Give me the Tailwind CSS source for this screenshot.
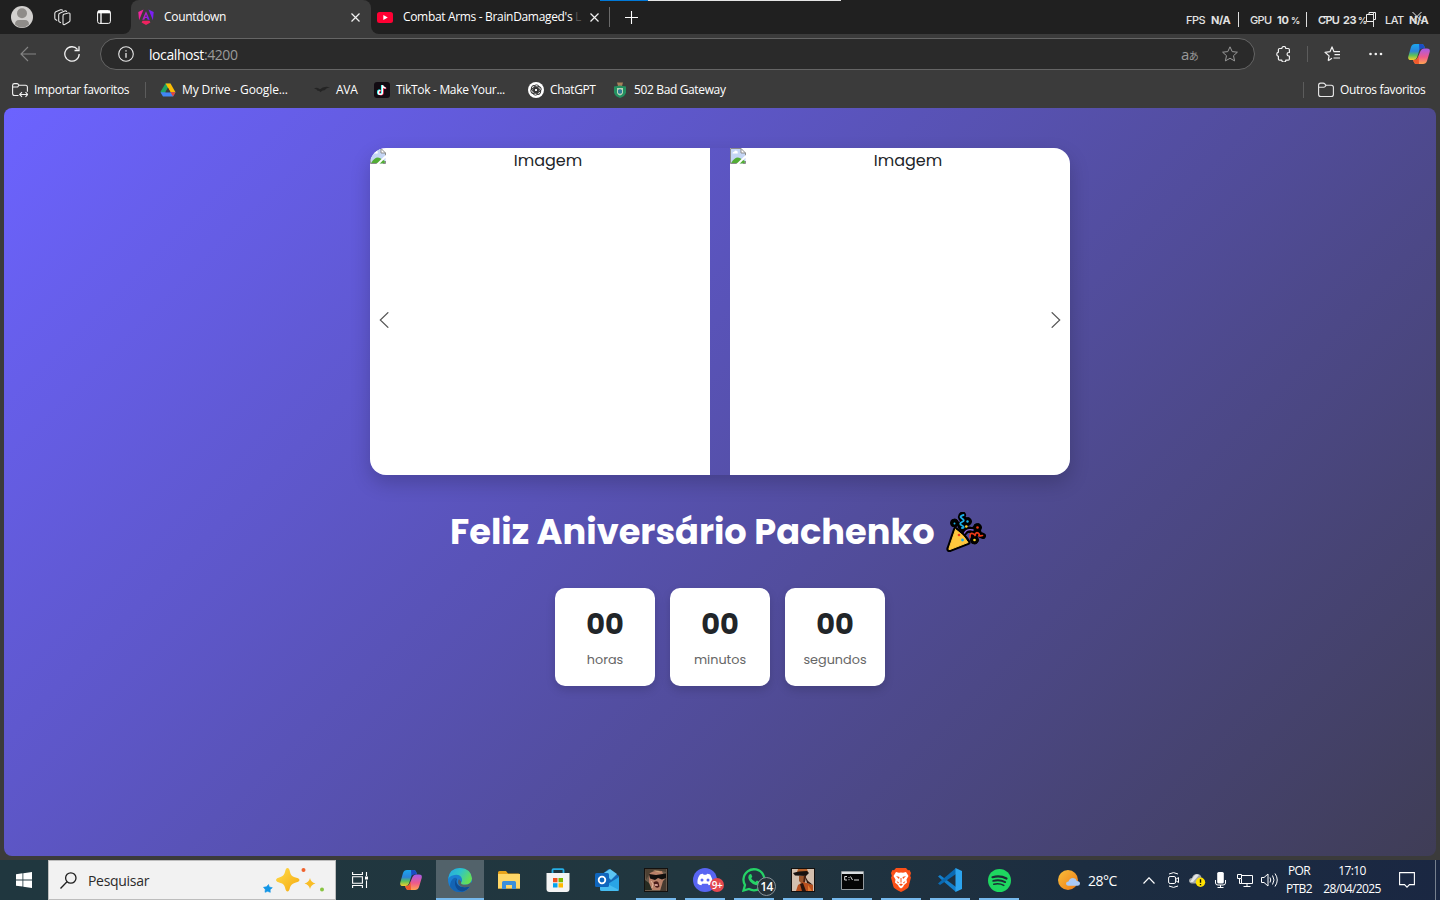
<!DOCTYPE html>
<html lang="pt-BR">
<head>
<meta charset="utf-8">
<title>Countdown</title>
<script src="https://cdn.jsdelivr.net/npm/@tailwindcss/browser@4"></script>
</head>
<body class="w-[1440px] h-[900px] overflow-hidden bg-[#3b3b3b] font-['Segoe_UI','Open_Sans',sans-serif] text-white text-[12px]">
<svg class="absolute h-0 w-0">
  <defs>
    <linearGradient id="cpA" x1="0" y1="0" x2="0" y2="1"><stop offset="0" stop-color="#1ba6ee"/><stop offset=".45" stop-color="#2c83d8"/><stop offset=".7" stop-color="#58c05c"/><stop offset="1" stop-color="#f5ce2c"/></linearGradient>
    <linearGradient id="cpB" x1="0" y1="0" x2="0" y2="1"><stop offset="0" stop-color="#a55bea"/><stop offset=".55" stop-color="#ee5a8b"/><stop offset="1" stop-color="#ffa451"/></linearGradient>
    <linearGradient id="ang" x1="0" y1="0" x2="1" y2=".5"><stop offset="0" stop-color="#f0249b"/><stop offset="1" stop-color="#7a1cf5"/></linearGradient>
    <linearGradient id="edA" x1="0" y1="0" x2="1" y2=".5"><stop offset="0" stop-color="#25a5e4"/><stop offset=".5" stop-color="#2fc4c8"/><stop offset="1" stop-color="#66df55"/></linearGradient>
    <linearGradient id="gold" x1="0" y1="0" x2="1" y2="1"><stop offset="0" stop-color="#ffdc4a"/><stop offset="1" stop-color="#f5a90f"/></linearGradient>
    <linearGradient id="sun" x1="0" y1="0" x2="1" y2="1"><stop offset="0" stop-color="#f9bf3b"/><stop offset="1" stop-color="#ee7a16"/></linearGradient>
    <symbol id="copilot" viewBox="0 0 22 20">
      <path d="M7 0h6.500q2 0 2.700 2l.6 2H14q-2 0-2.600 2L9 13.500Q8 16 5.500 16H3Q-.5 16 .3 12.500L3 3Q4 0 7 0z" fill="url(#cpA)"/>
      <path d="M11 0h2.500q2 0 2.700 2l.6 2.500H14q-2 0-2.600 2z" fill="#1b4cc4"/>
      <path d="M15 20H8.500q-2 0-2.700-2l-.6-2H7q2 0 2.600-2L12.500 7Q13.500 4.500 16 4.500h3q3.500 0 2.700 3.500L19 17q-1 3-4 3z" fill="url(#cpB)"/>
      <path d="M5.200 16H7q2 0 2.600-2l1-2.500L11 20H8.500q-2 0-2.700-2z" fill="#ef5a2c"/>
    </symbol>
    <symbol id="folder" viewBox="0 0 16 16"><path d="M.6 12.500V3.200Q.6 1.100 2.600 1.100h2.600q1 0 1.600.7l1.100 1.400h5.400q2.100 0 2.100 2.100v7.200q0 2-2.100 2H2.700q-2.100 0-2.100-2zM.6 5.200h5.200q.7 0 1.200-.6l1-1.300" fill="none" stroke="#e8e8e8" stroke-width="1.100"/></symbol>
    <symbol id="broken" viewBox="0 0 16 16">
      <path d="M.5.500h10.500l4.500 4.500v10.500H.5z" fill="#c5d6f5"/><path d="M2.500 5.500q0-1.700 1.700-1.700Q5 2 6.600 2.800q1.500.2 1.200 2.700z" fill="#fff"/>
      <path d="M.8 15.500q4.500-7.500 9-5.500l5 3v2.500z" fill="#53ad35"/>
      <path d="M.5 15.500V.5h10.500M15.500 5v3M.5 15.500h8M13 15.500h2.500V13" fill="none" stroke="#8b8b8b"/>
      <path d="M11 .5V5h4.500z" fill="#fff" stroke="#8b8b8b"/><path d="M16 6.800v2.500l-7 7H6z" fill="#fff"/>
    </symbol>
  </defs>
</svg>

<!-- Tab strip -->
<header class="relative flex h-[34px] bg-[#3b3b3b]">
  <div class="flex w-[131px] items-center pl-[11px] bg-[#202020] rounded-br-lg relative">
    <svg class="w-[22px] h-[22px]" viewBox="0 0 22 22"><circle cx="11" cy="11" r="11" fill="#d2d0ce"/><circle cx="11" cy="7.300" r="5" fill="#8f8c89"/><path d="M4 18.500q0-4.500 4-4.500h6q4 0 4 4.500-3 3-7 3t-7-3z" fill="#8f8c89"/></svg>
    <svg class="ml-[21px] w-[17px] h-[17px]" viewBox="0 0 17 17" fill="none" stroke="#e6e6e6" stroke-width="1.100"><path d="M9.800 5.300l4.500-1.300q1.700-.3 1.700 1.200v6.300q0 1.100-1 1.400l-4.300 2.500q-1.700.8-1.700-.8V7q0-1.300.8-1.700z"/><path d="M7 13.700l-1.500-.6Q4.700 12.600 4.700 11.500V6q0-1.300 1-1.700l5-2.300q1.700-.4 2 1M3.200 11.500L1.800 10.700Q.8 10.300.8 9V4.500q0-1.200 1-1.700L6.600.8q1.600-.4 2.100.6"/></svg>
    <svg class="ml-[26px] w-[14px] h-[14px]" viewBox="0 0 14 14" fill="none" stroke="#fff"><rect x=".6" y=".6" width="12.800" height="12.800" rx="2"/><path d="M.6 2.600h12.800M4 3v10.500" stroke-width="1.300"/><path d="M1 1.900h12" stroke-width="2.400"/></svg>
  </div>
  <div class="w-[240px] bg-[#202020]"><div class="flex h-full items-center rounded-t-lg bg-[#3b3b3b] pl-[7px]">
    <svg class="w-4 h-4" viewBox="0 0 16 16"><path d="M5.500.6L.3 3l.8 8.200z" fill="#f2249c"/><path d="M10.500.6L15.700 3l-.8 8.200z" fill="#7b1ff4"/><path d="M8 2.300l3.700 8.500h-2L9 9H7l-.7 1.800h-2zM8 5.500L7.100 7.800h1.800z" fill="url(#ang)"/><path d="M4.500 11.800h7l.9 1.800L8 16l-4.400-2.400z" fill="#f0225f"/></svg>
    <span class="ml-[10px] w-[187px] whitespace-nowrap tracking-[-0.32px]">Countdown</span>
    <svg class="w-[9px] h-[9px]" viewBox="0 0 9 9" stroke="#f2f2f2" stroke-width="1.200"><path d="M.5.500l8 8M8.500.5l-8 8"/></svg>
  </div></div>
  <div class="flex w-[239px] items-center rounded-bl-lg bg-[#202020] pl-[6px]">
    <svg class="w-4 h-[11px]" viewBox="0 0 16 11"><rect width="16" height="11" rx="2.500" fill="#f03"/><path d="M6.300 3v5l4.500-2.500z" fill="#fff"/></svg>
    <span class="ml-[10px] w-[177px] whitespace-nowrap tracking-[-0.33px]">Combat Arms - BrainDamaged's <span class="text-[#555]">L</span></span>
    <svg class="ml-[10px] w-[9px] h-[9px]" viewBox="0 0 9 9" stroke="#f2f2f2" stroke-width="1.200"><path d="M.5.500l8 8M8.500.5l-8 8"/></svg>
    <span class="ml-[10px] h-5 w-px shrink-0 bg-[#6a6a6a]"></span>
  </div>
  <div class="flex flex-1 items-center bg-[#202020] pl-[15px]">
    <svg class="w-[13px] h-[13px]" viewBox="0 0 13 13" stroke="#fff" stroke-width="1.100"><path d="M6.500 0v13M0 6.500h13"/></svg>
  </div>
  <div class="absolute left-[600px] top-0 flex h-px w-[241px]"><span class="w-12 bg-[#0078d7]"></span><span class="flex-1 bg-[#e6e6e6]"></span></div>
  <!-- window controls -->
  <svg class="absolute left-[1316px] top-[11px] w-[110px] h-[14px]" viewBox="0 0 110 14" fill="none" stroke="#f2f2f2"><path d="M5 5.500h10M50.500 3.500h7v7h-7zM53 3V1.500h6.500v7H58"/><path d="M96.500 1l9 9M105.500 1l-9 9"/></svg>
  <!-- performance overlay -->
  <div class="absolute left-[1186px] top-[11px] flex h-4 items-center font-['Inter',sans-serif] text-[11px] leading-4 text-[#e2e2e2] whitespace-nowrap">
    <span class="w-[25px] pt-0.5 font-medium tracking-[-0.5px]">FPS</span><b class="w-[27px] pt-0.5 tracking-[-0.5px]">N/A</b><i class="h-[15px] w-px bg-[#ddd]"></i>
    <span class="ml-[11px] w-[27px] pt-0.5 font-medium tracking-[-0.6px]">GPU</span><b class="w-[14px] pt-0.5 tracking-[-0.3px]">10</b><b class="w-[15px] pt-[3px] text-[9px]">%</b><i class="h-[15px] w-px bg-[#ddd]"></i>
    <span class="ml-[11px] w-[25px] pt-0.5 tracking-[-0.7px] font-semibold">CPU</span><b class="w-[15px] pt-0.5 tracking-[-0.5px]">23</b><b class="w-[15px] pt-[3px] text-[9px]">%</b><i class="h-[15px] w-px bg-[#ddd]"></i>
    <span class="ml-[11px] w-[24px] pt-0.5 font-medium tracking-[-0.5px]">LAT</span><b class="pt-0.5 tracking-[-0.5px]">N/A</b>
  </div>
</header>

<!-- Address bar -->
<div class="flex h-10 items-center">
  <svg class="ml-5 w-4 h-4" viewBox="0 0 16 16" fill="none" stroke="#858585" stroke-width="1.100"><path d="M16 8H1M8 1L1 8l7 7"/></svg>
  <svg class="ml-7 w-4 h-4" viewBox="0 0 16 16" fill="none" stroke="#f2f2f2" stroke-width="1.300"><path d="M15.200 8A7.200 7.200 0 1 1 13.500 3.300M15 .3v4.200h-4.500"/></svg>
  <div class="ml-5 flex h-8 w-[1155px] items-center rounded-full border border-[#656565] bg-[#2a2a2a] pl-[17px]">
    <svg class="w-4 h-4" viewBox="0 0 16 16" fill="none" stroke="#e8e8e8" stroke-width="1.100"><circle cx="8" cy="8" r="7.300"/><path d="M8 7v4.700M8 4.200v1.400" stroke-width="1.300"/></svg>
    <span class="ml-[15px] w-[1032px] whitespace-nowrap text-[14px] tracking-[-0.42px]">localhost<span class="text-[#9a9a9a]">:4200</span></span>
    <span class="w-[21px] whitespace-nowrap text-[15px] leading-none tracking-[-0.5px] text-[#999]">a<span class="font-['Noto_Sans_CJK_JP',sans-serif] text-[10px]">あ</span></span>
    <svg class="ml-5 w-4 h-4" viewBox="0 0 16 16" fill="none" stroke="#999" stroke-linejoin="round"><path d="M8 .8l2.200 4.800 5.200.6-3.900 3.500 1.100 5.200L8 12.300l-4.600 2.600 1.100-5.200L.6 6.200l5.200-.6z"/></svg>
  </div>
  <svg class="ml-[20px] w-4 h-4" viewBox="0 0 16 16" fill="none" stroke="#f2f2f2" stroke-width="1.200" stroke-linejoin="round"><path d="M6.800 2.500a2 2 0 0 1 4 0h2.400q1.200 0 1.200 1.200V6.500h-.6a1.700 1.700 0 0 0 0 3.500h.6v3q0 1.200-1.200 1.200h-2.400a2 2 0 0 1-4 0H4.600q-1.200 0-1.200-1.200v-2.700a2.100 2.100 0 0 1 0-4.100V3.700q0-1.200 1.200-1.200z"/></svg>
  <span class="ml-4 h-4 w-px bg-[#5c5c5c]"></span>
  <svg class="ml-4 w-[17px] h-4" viewBox="0 0 17 16" fill="none" stroke="#f2f2f2" stroke-width="1.200" stroke-linejoin="round"><path d="M4.200 14.700l.9-4.800L1 6.300l5-.6 2-4.800 2 4.800h6M4.200 14.700L8 12.300M10.500 8.700H16M9.500 12H16"/></svg>
  <svg class="ml-[28px] w-[14px] h-4" viewBox="0 0 14 16" fill="#f2f2f2"><circle cx="1.500" cy="8" r="1.300"/><circle cx="6.800" cy="8" r="1.300"/><circle cx="12" cy="8" r="1.300"/></svg>
  <svg class="ml-[25px] w-[22px] h-5"><use href="#copilot"/></svg>
</div>

<!-- Favourites bar -->
<nav class="flex h-[34px] items-center pb-0.5 whitespace-nowrap">
  <svg class="ml-3 w-4 h-4" viewBox="0 0 16 16" fill="none" stroke="#f2f2f2" stroke-width="1.100"><path d="M6.500 13.500h-4Q.6 13.500.6 11.500v-8Q.6 1.600 2.500 1.600h2.300q1 0 1.500.7l.8.900H13.500q1.900 0 1.900 2v4.500M.6 5h5l1.500-1.800M8 12.500h7.500M10 10.200l-2.300 2.300L10 14.800M13.500 10.200l2.300 2.300-2.300 2.300"/></svg>
  <span class="ml-[6px] w-[111px] tracking-[-0.38px]">Importar favoritos</span>
  <span class="h-4 w-px bg-[#5c5c5c]"></span>
  <svg class="ml-[14px] w-4 h-4" viewBox="0 0 16 16"><path d="M5.500 1.500h5L8 5.800 3.200 14 .5 9.800z" fill="#1fa463"/><path d="M5.500 1.500h5l5 8.700h-5z" fill="#fbbc04"/><path d="M.5 10.200h15L13 14.500H3z" fill="#4285f4"/><path d="M8 5.800l2.500 4.400h-5z" fill="#3b3b3b"/><path d="M10.500 10.200h5L13 14.500z" fill="#ea4335"/></svg>
  <span class="ml-[6px] w-[132px] tracking-[-0.12px]">My Drive - Google...</span>
  <svg class="w-4 h-4" viewBox="0 0 16 16"><path d="M0 6.500q3-2 6 .8Q9.500 3.500 16 5.200q-4 .5-5.300 3-2.500-.4-4.200 2Q5.500 8.200 3.500 8.800 3 6.800 0 6.500z" fill="#242424"/></svg>
  <span class="ml-[6px] w-[38px] tracking-[-0.3px]">AVA</span>
  <svg class="w-4 h-4" viewBox="0 0 16 16"><rect width="16" height="16" rx="3" fill="#120b12"/><path d="M7.800 3v7.200a2 2 0 1 1-2-2M8 3q.3 2.500 3.300 2.900" fill="none" stroke="#25f4ee" stroke-width="1.700"/><path d="M9 3.500v7.200a2 2 0 1 1-2-2M9 3.500q.3 2.500 3.300 2.900" fill="none" stroke="#fe2c55" stroke-width="1.500"/><path d="M8.400 3.200v7.200a2 2 0 1 1-2-2M8.400 3.200q.3 2.500 3.300 2.900" fill="none" stroke="#fff" stroke-width="1.300"/></svg>
  <span class="ml-[6px] w-[132px] tracking-[-0.31px]">TikTok - Make Your...</span>
  <svg class="w-4 h-4" viewBox="0 0 16 16"><circle cx="8" cy="8" r="8" fill="#fff"/><g fill="none" stroke="#333" stroke-width=".9"><rect x="6" y="2.800" width="5" height="7" rx="2.500"/><rect x="6" y="2.800" width="5" height="7" rx="2.500" transform="rotate(60 8 8)"/><rect x="6" y="2.800" width="5" height="7" rx="2.500" transform="rotate(120 8 8)"/><rect x="6" y="2.800" width="5" height="7" rx="2.500" transform="rotate(180 8 8)"/><rect x="6" y="2.800" width="5" height="7" rx="2.500" transform="rotate(240 8 8)"/><rect x="6" y="2.800" width="5" height="7" rx="2.500" transform="rotate(300 8 8)"/></g></svg>
  <span class="ml-[6px] w-[62px] tracking-[-0.42px]">ChatGPT</span>
  <svg class="w-4 h-4" viewBox="0 0 16 16"><path d="M5 .5h6l-1 3.500H6z" fill="#a8805a"/><path d="M2 4.500l6-1 6 1v6q-1 4-6 5.500-5-1.500-6-5.500z" fill="#249060"/><path d="M5 6h6v5q-1 2-3 2.500Q6 13 5 11z" fill="#b9d5b5"/><path d="M6 8l2-1 2 1v3l-2 1-2-1z" fill="#347a9a"/></svg>
  <span class="ml-[6px] w-[669px] tracking-[-0.36px]">502 Bad Gateway</span>
  <span class="h-4 w-px bg-[#5c5c5c]"></span>
  <svg class="ml-[14px] w-4 h-4"><use href="#folder"/></svg>
  <span class="ml-[6px] tracking-[-0.35px]">Outros favoritos</span>
</nav>

<!-- Page -->
<main class="mx-1 flex h-[748px] flex-col items-center overflow-hidden rounded-lg bg-[linear-gradient(135deg,#6c63ff,#3f3d56)] pt-10 font-['Poppins',sans-serif] text-[#212529]">
  <section class="relative flex h-[327px] w-[700px] gap-5 overflow-hidden rounded-2xl shadow-[0_8px_20px_rgba(0,0,0,0.2)]">
    <div class="flex flex-1 bg-white"><svg class="h-4 w-4"><use href="#broken"/></svg><span class="flex-1 pt-px text-center text-[16px] leading-6">Imagem</span></div>
    <div class="flex flex-1 bg-white"><svg class="h-4 w-4"><use href="#broken"/></svg><span class="flex-1 pt-px text-center text-[16px] leading-6">Imagem</span></div>
    <svg class="absolute left-[9px] top-[164px] h-4 w-[10px]" viewBox="0 0 10 16" fill="none" stroke="#555" stroke-width="1.200"><path d="M9.300.300L1.300 8l8 7.700"/></svg>
    <svg class="absolute right-[9px] top-[164px] h-4 w-[10px]" viewBox="0 0 10 16" fill="none" stroke="#555" stroke-width="1.200"><path d="M.7.300l8 7.700-8 7.700"/></svg>
  </section>
  <h1 class="mt-[35px] flex h-[43px] w-[540px] items-center whitespace-nowrap text-[35.2px] font-bold leading-none text-white">
    <span class="w-[496px]">Feliz Aniversário Pachenko</span>
    <svg class="h-10 w-10 shrink-0" viewBox="0 0 40 40" fill="none" stroke-linecap="round" stroke-linejoin="round">
      <g stroke="#000" fill="#000">
        <path d="M9.500 17.500L3 36.500q-.6 1.500 1 1L22 30.500Q18 23 9.500 17.500z" stroke-width="5"/>
        <path d="M16.500 3q-2.500 2 .5 4t-.5 4.500 1 4.500" fill="none" stroke-width="7"/>
        <path d="M19 20q2.500-4 7-1.500L31 15.700l2 6.500 4 1.800M27 23l1.600 5" stroke-width="6"/>
        <circle cx="8.500" cy="11" r="4"/><circle cx="21.500" cy="9.500" r="4"/><circle cx="28.500" cy="28" r="4"/><circle cx="31.500" cy="15.500" r="4"/>
      </g>
      <path d="M9.500 17.500L3 36.500q-.6 1.500 1 1L22 30.500Q18 23 9.500 17.500z" fill="#ffc83d" stroke="#ffc83d"/>
      <path d="M17.500 3q-5 1.500-1.500 3.500t0 3.500 0 3.500 0 2.500" stroke="#1baee8" stroke-width="1.900"/>
      <path d="M18.500 21q2-4.500 8.500-3" stroke="#8562d5" stroke-width="1.400"/>
      <path d="M24 25q0-4.500 2.500-3.500t2.500 2q1-4 3-2.500t1 2.500 3.500 0" stroke="#f03a17" stroke-width="1.700"/>
      <g fill="#f03a17"><circle cx="13" cy="23" r="1.300"/><circle cx="31.500" cy="15.500" r="1.300"/></g>
      <g fill="#1baee8"><circle cx="16.500" cy="28" r="1.400"/><circle cx="21.500" cy="9.500" r="1.200"/><circle cx="8.500" cy="11.500" r="1"/></g>
      <g fill="#ffd32a"><circle cx="20.300" cy="14.500" r="1.300"/><circle cx="28.500" cy="28" r="1.300"/></g>
    </svg>
  </h1>
  <section class="mt-[35px] flex gap-[15px]">
    <div class="flex h-[98px] w-[100px] flex-col items-center rounded-[10px] bg-white pt-[18px] shadow-[0_4px_10px_rgba(0,0,0,0.15)]"><b class="text-[28.8px] leading-9">00</b><span class="mt-[8px] text-[12.8px] leading-5 text-[#666]">horas</span></div>
    <div class="flex h-[98px] w-[100px] flex-col items-center rounded-[10px] bg-white pt-[18px] shadow-[0_4px_10px_rgba(0,0,0,0.15)]"><b class="text-[28.8px] leading-9">00</b><span class="mt-[8px] text-[12.8px] leading-5 text-[#666]">minutos</span></div>
    <div class="flex h-[98px] w-[100px] flex-col items-center rounded-[10px] bg-white pt-[18px] shadow-[0_4px_10px_rgba(0,0,0,0.15)]"><b class="text-[28.8px] leading-9">00</b><span class="mt-[8px] text-[12.8px] leading-5 text-[#666]">segundos</span></div>
  </section>
</main>

<!-- Taskbar -->
<footer class="mt-1 flex h-10 items-center bg-[linear-gradient(90deg,#20373f,#21363f_50%,#1c2d40_75%,#1a2742)] whitespace-nowrap">
  <svg class="ml-4 w-4 h-4" viewBox="0 0 16 16" fill="#fff"><path d="M0 2.200l6.500-.9v6.200H0zM7.300 1.200L16 0v7.500H7.300zM0 8.400h6.500v6.200L0 13.700zM7.300 8.400H16V16l-8.700-1.300z"/></svg>
  <div class="ml-4 flex h-10 w-[288px] items-center border border-[#bdbdbd] bg-[#f2f2f2] pl-[11px] text-[#2b2b2b]">
    <svg class="w-[17px] h-[17px]" viewBox="0 0 17 17" fill="none" stroke="#1f1f1f" stroke-width="1.300"><circle cx="10.800" cy="6" r="5.200"/><path d="M7 9.800L.5 16.500"/></svg>
    <span class="ml-[11px] w-[175px] text-[14px] tracking-[-0.3px]">Pesquisar</span>
    <svg class="w-[62px] h-[26px]" viewBox="0 0 62 26"><path d="M24.500 1q1.800 0 2.500 4 .8 3.800 4 5 5.500 1.200 5.500 3t-5 3q-3.500 1-4.500 4.500-.8 4-2.500 4t-2.500-4q-1-3.700-4.500-4.500-4.500-1.200-4.500-3t4.500-3q3.500-1 4.500-5 .7-4 2.500-4z" fill="url(#gold)"/><path d="M47 11q.8 4.300 5.500 5.500-4.500 1-5.500 5.500-1-4.500-5.500-5.500 4.500-1.200 5.500-5.500z" fill="#f9bd26"/><path d="M5.500 17.500l.8 2.500 3 .7-2.200 2 .2 2.600-2.700-1-2.600 1 .3-2.800L.5 20.300l3-.6z" fill="#1296e6" stroke="#1296e6" stroke-width=".6" stroke-linejoin="round"/><circle cx="40.500" cy="3" r="2" fill="#f0622d"/><circle cx="59" cy="22.500" r="2" fill="#88c440"/></svg>
  </div>
  <svg class="ml-4 w-4 h-4" viewBox="0 0 16 16" fill="none" stroke="#fff" stroke-width="1.100"><path d="M.6 0v2.500h9.800V0M.6 16v-2.500h9.800V16M.6 4.800h9.800v6.400H.6zM14.500 0v4M14.500 8.500V16"/><path d="M13 4.500h3v3h-3z" fill="#fff" stroke="none"/></svg>
  <div class="ml-[19px] flex h-10 gap-px *:flex *:w-12 *:items-center *:justify-center *:relative">
    <div><svg class="w-[22px] h-5"><use href="#copilot"/></svg></div>
    <div class="bg-[#52626a]"><svg class="w-6 h-6" viewBox="0 0 24 24"><circle cx="12" cy="12" r="12" fill="#1b7fd2"/><path d="M9 11q-2.500 4 0 8 3 4.500 8 4-2.500 1-5 1Q5 24 2 18.500q0-6 4-8.500 2-1 3 1z" fill="#1464b4"/><path d="M9 10.500q-1.500 3.500 1 6.500 4 4 12 1.200Q19 23 14 23.500q-5-1-6.500-5.500-1.500-5 1.500-7.500z" fill="#0f4c94"/><path d="M13 13.500Q13 16.500 17 16.800q4 0 6-3l1.500 2-2 2.800Q14 20.500 11 17q-2-3 0-6z" fill="#52626a"/><path d="M.2 11Q1.500 0 12 0q11 .5 12 10.500Q23.500 16.500 17 16.500q-4 0-4-1.500 1.500-1.500 1-4Q12.500 6.500 8 6.800 2 7.300.2 11z" fill="url(#edA)"/></svg><i class="absolute bottom-0 h-0.5 w-12 bg-[#76b9ed]"></i></div>
    <div><svg class="w-[22px] h-5" viewBox="0 0 22 20"><path d="M0 2.500Q0 1 1.500 1H8l2 2.500H20.500Q22 3.500 22 5v13.500H0z" fill="#e9a41a"/><path d="M0 4h22v14.500H0z" fill="#ffd767"/><path d="M4 19v-6.500Q4 11 5.500 11h11q1.500 0 1.500 1.500V19h-4v-4H8v4z" fill="#3b8fdb"/></svg></div>
    <div><svg class="w-6 h-6" viewBox="0 0 24 24"><path d="M6.500 6V2Q6.500 1.200 7.500 1.200h9q1 0 1 .8v4" fill="none" stroke="#26aee5" stroke-width="1.800"/><path d="M.5 5h23v16q0 3-3 3h-17q-3 0-3-3z" fill="#f4f4f4"/><path d="M7 10h4.500v4.300H7z" fill="#f2511f"/><path d="M12.500 10H17v4.300h-4.500z" fill="#7eba00"/><path d="M7 15.200h4.500v4.300H7z" fill="#04a3ee"/><path d="M12.500 15.200H17v4.300h-4.500z" fill="#feb800"/></svg></div>
    <div><svg class="w-6 h-6" viewBox="0 0 24 24"><path d="M5 8l8.500-7L24 8v13q0 2-2 2H7q-2 0-2-2z" fill="#1569b8"/><path d="M9 5l6-4 7 5-6 6z" fill="#5cc5f3"/><path d="M5 21l19-12v12q0 2-2 2H7q-2 0-2-2z" fill="#29a5e6"/><path d="M5 12l19 10q-1 1-2 1H7q-2 0-2-2z" fill="#46bdf1"/><rect y="5" width="14" height="14" rx="1.500" fill="#0f66bd"/><circle cx="7" cy="12" r="3.300" fill="none" stroke="#fff" stroke-width="1.800"/></svg></div>
    <div><svg class="w-6 h-6" viewBox="0 0 24 24"><path d="M0 0h24v24H0z" fill="#14110f"/><path d="M1 1h22v22H1z" fill="#6b5a4b"/><path d="M5 3q7-3 13 0l3 9-3 10H8L5 15z" fill="#b98169"/><path d="M1 1h21v3Q12 1 6 5L2 12z" fill="#4d4032"/><path d="M9 2l6 1 3 2-5-1z" fill="#c9a27a"/><path d="M5 6l7 1 10-1.500V10l-4 1.500-4-1.500-3 2-5-1.500z" fill="#100e0d"/><path d="M9.500 14.500q3-2.500 5 0l1 4q-3 3-5-1z" fill="#4a1c18"/><path d="M10.500 16h3l.5 2h-3z" fill="#d09a90"/><path d="M1 12l4 3 3 7H1z" fill="#262b22"/><path d="M19 13l3-3v13h-6z" fill="#463a30"/><path d="M7 13l2 3-1 4" stroke="#e2b79c" fill="none"/></svg><i class="absolute bottom-0 h-0.5 w-10 bg-[#76b9ed]"></i></div>
    <div><svg class="w-6 h-6" viewBox="0 0 24 24"><circle cx="12" cy="12" r="12" fill="#5865f2"/><path d="M7 6.500q2-1 3-.8l.6 1h2.800l.6-1q1.500 0 3.200.8 2.800 4.500 2.300 9-2 1.600-3.800 1.700l-.9-1.500H9.200l-.9 1.500q-2-.1-3.800-1.700-.5-5 2.500-9z" fill="#fff"/><circle cx="9" cy="12" r="1.500" fill="#5865f2"/><circle cx="15" cy="12" r="1.500" fill="#5865f2"/></svg><span class="absolute left-[29px] top-[18px] flex h-[14px] w-[14px] items-center justify-center rounded-full bg-[#e5484f] text-[10px] font-semibold leading-none tracking-[-0.4px]">9+</span><i class="absolute bottom-0 h-0.5 w-10 bg-[#76b9ed]"></i></div>
    <div><svg class="w-6 h-6" viewBox="0 0 24 24"><path d="M1.500 22.500L3 17Q1.200 14 1.500 11A10.500 10.500 0 1 1 7 21z" fill="none" stroke="#25d366" stroke-width="2.300"/><path d="M8 6l1.300.2 1 2.600L9.200 10.300q1.300 2.500 4.200 3.800l1.500-1.500 2.600 1.200q.3 2.500-2.500 3.300Q11.500 17.500 8 13.500 4.500 9 8 6z" fill="#25d366"/></svg><span class="absolute left-[27px] top-[17px] flex h-[19px] w-[19px] items-center justify-center rounded-full border border-[#88939a] bg-[#263238] text-[12px] font-semibold leading-none tracking-[-0.6px]">14</span><i class="absolute bottom-0 h-0.5 w-10 bg-[#76b9ed]"></i></div>
    <div><svg class="w-6 h-6" viewBox="0 0 24 24"><path d="M0 0h24v24H0z" fill="#14110f"/><path d="M1 1h22v22H1z" fill="#d3bfae"/><path d="M7 1h9l1 3H6z" fill="#b5602a"/><path d="M2 5q5-2 14-2l2 2-3 3-11-.5z" fill="#17110f"/><path d="M8 8h7l-1 6-3 2-3-3z" fill="#9b552c"/><path d="M13 7l2 1-1 6-2 2z" fill="#4a2213"/><path d="M5 23l2-6 5-3 4 1 6 2v6z" fill="#b9501e"/><path d="M12 15l3 8h-4l-2-7z" fill="#28150f"/><path d="M17 17l4 6h-4z" fill="#e07a33"/><path d="M14 8l3 5 5 4-6-2z" fill="#2b160e"/></svg><i class="absolute bottom-0 h-0.5 w-10 bg-[#76b9ed]"></i></div>
    <div><svg class="w-[23px] h-[19px]" viewBox="0 0 23 19"><path d="M.5.500h22v18H.5z" fill="#050505" stroke="#93999d"/><path d="M1 1h21v2H1z" fill="#d9dde0"/><path d="M6 5.500H3.700v3.500H6M8 6v1M8 8.200v1M9.500 5.500l2 3.500M13 9h5" fill="none" stroke="#dadada"/></svg><i class="absolute bottom-0 h-0.5 w-10 bg-[#76b9ed]"></i></div>
    <div><svg class="w-5 h-6" viewBox="0 0 20 24"><path d="M5 0h10l2 2.200 1.500-.2L20 5l-.8 3L20 9.500 17.500 19Q17 20.500 10 24 3 20.500 2.500 19L0 9.500.8 8 0 5l1.500-3 1.500.2z" fill="#fb5018"/><path d="M5 4l3 .8L10 4.500l2 .3L15 4l2.500 4-2 3.500.5 3-3 2.500 -1 2-2 1.500-2-1.500-1-2-3-2.500.5-3-2-3.500z" fill="#fff"/><path d="M5 8l3.500 1L8 11zM15 8l-3.500 1 .5 2zM8 16.500l2-1 2 1-2 1.500zM9.500 10h1v4.500h-1zM5.500 13l2.500 1.500-1 1zM14.500 13L12 14.500l1 1z" fill="#fb5018"/></svg><i class="absolute bottom-0 h-0.5 w-10 bg-[#76b9ed]"></i></div>
    <div><svg class="w-6 h-6" viewBox="0 0 24 24"><path d="M0 8.500L2 7l16 12v5L5 13z" fill="#1480cd"/><path d="M0 15.500L2 17 18 6V0L5 11z" fill="#0a6ab3"/><path d="M17.500 0L24 3v18l-6.500 3z" fill="#2ca4ee"/></svg><i class="absolute bottom-0 h-0.5 w-10 bg-[#76b9ed]"></i></div>
    <div><svg class="w-[23px] h-[23px]" viewBox="0 0 23 23" fill="none" stroke="#1b2c35" stroke-linecap="round"><circle cx="11.500" cy="11.500" r="11.500" fill="#1ed760" stroke="none"/><path d="M4.500 8.200q7.500-2.200 14 1.300" stroke-width="2.200"/><path d="M5.200 11.900q6.500-1.800 12 1.200" stroke-width="1.800"/><path d="M5.800 15.300q5.500-1.300 10 1.100" stroke-width="1.500"/></svg><i class="absolute bottom-0 h-0.5 w-10 bg-[#76b9ed]"></i></div>
  </div>
  <svg class="ml-[35px] w-[22px] h-[20px]" viewBox="0 0 22 20"><circle cx="10" cy="10" r="10" fill="url(#sun)"/><path d="M10 15.800q-2-.3-2-2 0-2.200 2.500-2.300Q11.500 8 15 8q3 .2 3.800 3 3.200.2 3.200 2.500 0 2.200-2.500 2.300z" fill="#a9c9f6"/></svg>
  <span class="ml-2 w-[55px] text-[14px] tracking-[-0.5px]">28°C</span>
  <svg class="w-3 h-[7px]" viewBox="0 0 12 7" fill="none" stroke="#fff" stroke-width="1.200"><path d="M.5 6.500L6 .8l5.500 5.700"/></svg>
  <svg class="ml-[13px] w-[11px] h-4" viewBox="0 0 11 16" fill="none" stroke="#fff"><path d="M1 2Q5.500-.8 10 2M1 14q4.500 2.800 9 0"/><rect x=".6" y="4.500" width="7" height="7" rx="1.500"/><path d="M7.600 7.500L10.500 5.500v5L7.600 8.500"/></svg>
  <svg class="ml-[10px] w-[17px] h-[14px]" viewBox="0 0 17 14"><path d="M3 10.500q-3-.4-3-3Q.2 5 3 5q1-4 5-4t4.500 4q2 .8 2 5.500z" fill="#a4a8aa"/><path d="M5 3Q7 0 10 2L4 9H1z" fill="#e3e5e6"/><circle cx="11.500" cy="9.300" r="4.700" fill="#ffe100"/><path d="M11.500 6.300v3.500M11.500 11v1.300" stroke="#111" stroke-width="1.400"/></svg>
  <svg class="ml-[9px] w-[11px] h-4" viewBox="0 0 11 16" fill="none" stroke="#fff"><rect x="2.200" width="6.600" height="11.500" rx="1.500" fill="#fff" stroke="none"/><path d="M.5 8v3Q.5 13 3 13h5q2.500 0 2.500-2V8M5.500 13v2.500M2.500 15.500h6"/></svg>
  <svg class="ml-[11px] w-4 h-4" viewBox="0 0 16 16" fill="none" stroke="#fff"><path d="M5 3.500h10.500v8h-11V7M10 11.500v3M6.500 14.500h7M.5 2.500h4v4h-4zM2.500 6.500v5h2"/></svg>
  <svg class="ml-2 w-[17px] h-4" viewBox="0 0 17 16" fill="none" stroke="#fff"><path d="M.5 5.500H3L7 2v12l-4-3.500H.5zM9 5.500q1.500 2.500 0 5M11.500 3.500q3 4.500 0 9M14 1.500q4.500 6.500 0 13"/></svg>
  <div class="ml-[7px] flex w-[28px] flex-col items-center text-[12px] leading-[18px] tracking-[-0.6px]"><span>POR</span><span>PTB2</span></div>
  <div class="ml-[9px] flex w-[60px] flex-col items-center text-[12px] leading-[18px] tracking-[-0.6px]"><span>17:10</span><span>28/04/2025</span></div>
  <svg class="ml-[17px] w-4 h-4" viewBox="0 0 16 16" fill="none" stroke="#fff" stroke-width="1.100"><path d="M.6.600h14.800v12H10.500L8 15.200 5.500 12.600H.6z"/></svg>
  <span class="ml-5 h-10 w-px bg-[#76808e]"></span>
</footer>
</body>
</html>
